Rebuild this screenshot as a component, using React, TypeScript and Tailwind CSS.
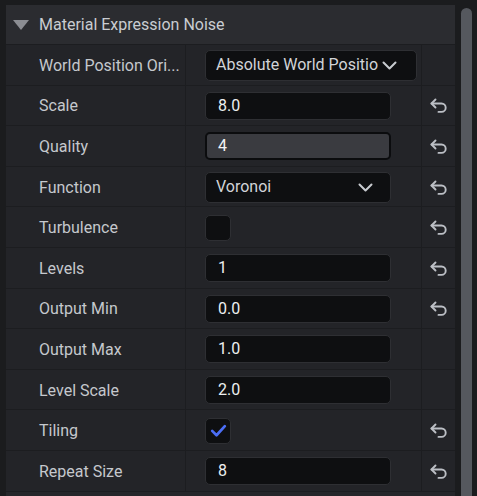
import React from "react";

const Reset = () => (
  <svg width="18" height="16" viewBox="0 0 18 16" fill="none" stroke="#bcbfc5" strokeWidth="1.9" strokeLinecap="round" strokeLinejoin="round">
    <path d="M5.5 1.5 1.5 5.5l4 4" />
    <path d="M1.5 5.5h10a4.2 4.2 0 0 1 0 8.4H8.5" />
  </svg>
);

const Chevron = () => (
  <svg width="15" height="9" viewBox="0 0 15 9" fill="none" stroke="#c8cbd0" strokeWidth="2" strokeLinecap="round" strokeLinejoin="round">
    <path d="M1.5 1.5 7.5 7.5 13.5 1.5" />
  </svg>
);

type Row = {
  label: string;
  kind: "dropdown" | "input" | "focus" | "select" | "check" | "checked";
  value?: string;
  reset: boolean;
};

const rows: Row[] = [
  { label: "World Position Ori...", kind: "dropdown", value: "Absolute World Positio", reset: false },
  { label: "Scale", kind: "input", value: "8.0", reset: true },
  { label: "Quality", kind: "focus", value: "4", reset: true },
  { label: "Function", kind: "select", value: "Voronoi", reset: true },
  { label: "Turbulence", kind: "check", reset: true },
  { label: "Levels", kind: "input", value: "1", reset: true },
  { label: "Output Min", kind: "input", value: "0.0", reset: true },
  { label: "Output Max", kind: "input", value: "1.0", reset: false },
  { label: "Level Scale", kind: "input", value: "2.0", reset: false },
  { label: "Tiling", kind: "checked", reset: true },
  { label: "Repeat Size", kind: "input", value: "8", reset: true },
];

function Value({ r }: { r: Row }) {
  if (r.kind === "dropdown")
    return (
      <div className="flex h-[31px] w-[212px] items-center justify-between rounded-[5px] border border-[#2e2f33] bg-[#0e0f11] pl-[10px] pr-[19px] text-[16px] text-[#d2d4d8]">
        <span className="whitespace-nowrap">{r.value}</span>
        <Chevron />
      </div>
    );
  if (r.kind === "select")
    return (
      <div className="flex h-[31px] w-[186px] items-center justify-between rounded-[5px] border border-[#2e2f33] bg-[#0e0f11] pl-[10px] pr-[17px] text-[16px] text-[#d2d4d8]">
        <span>{r.value}</span>
        <Chevron />
      </div>
    );
  if (r.kind === "input")
    return (
      <div className="flex h-[28px] w-[186px] items-center rounded-[5px] border border-[#2e2f33] bg-[#0e0f11] pl-[12px] text-[16px] text-[#eceef0]">
        {r.value}
      </div>
    );
  if (r.kind === "focus")
    return (
      <div className="flex h-[28px] w-[186px] items-center rounded-[5px] border-2 border-[#0b0c0e] bg-[#3a3b40] pl-[11px] text-[16px] text-[#f2f3f5]">
        {r.value}
      </div>
    );
  return (
    <div className="flex h-[26px] w-[26px] items-center justify-center rounded-[5px] border border-[#2e2f33] bg-[#0e0f11]">
      {r.kind === "checked" && (
        <svg width="19" height="19" viewBox="0 0 24 24" fill="none" stroke="#4b6ef5" strokeWidth="3.4" strokeLinecap="round" strokeLinejoin="round">
          <path d="M4 12.5 9.5 18 20 6.5" />
        </svg>
      )}
    </div>
  );
}

export default function App() {
  return (
    <div
      className="flex h-[496px] w-[477px] overflow-hidden bg-[#1b1c1e]"
      style={{ fontFamily: "Roboto, 'Noto Sans', sans-serif" }}
    >
      <div className="ml-[6px] mt-[5px] flex w-[449px] flex-col">
        <div className="flex h-[40px] shrink-0 items-center border-b border-[#1c1d20] bg-[#2b2c30] pt-[1px]">
          <svg className="ml-[7px]" width="16" height="10" viewBox="0 0 16 10">
            <path d="M0 0h16L8 10z" fill="#8b8d92" />
          </svg>
          <span className="ml-[10px] text-[16px] text-[#c9ccd1]">Material Expression Noise</span>
        </div>
        {rows.map((r) => (
          <div key={r.label} className="flex h-[40.6px] shrink-0 border-b border-[#1c1d20] bg-[#232428]">
            <div className="flex w-[180px] shrink-0 items-center border-r border-[#1c1d20] pl-[33px] pt-[2px] text-[16px] text-[#c5c8cd] whitespace-nowrap">
              {r.label}
            </div>
            <div className="flex w-[236px] shrink-0 items-center border-r border-[#1c1d20] pl-[19px] pt-[1px]">
              <Value r={r} />
            </div>
            <div className="flex flex-1 items-center justify-center pt-[2px]">{r.reset && <Reset />}</div>
          </div>
        ))}
        <div className="h-[20px] shrink-0 bg-[#25262a]" />
      </div>
      <div className="ml-[6px] mt-[8px] h-[500px] w-[11px] rounded-t-full bg-[#55585e]" />
    </div>
  );
}
